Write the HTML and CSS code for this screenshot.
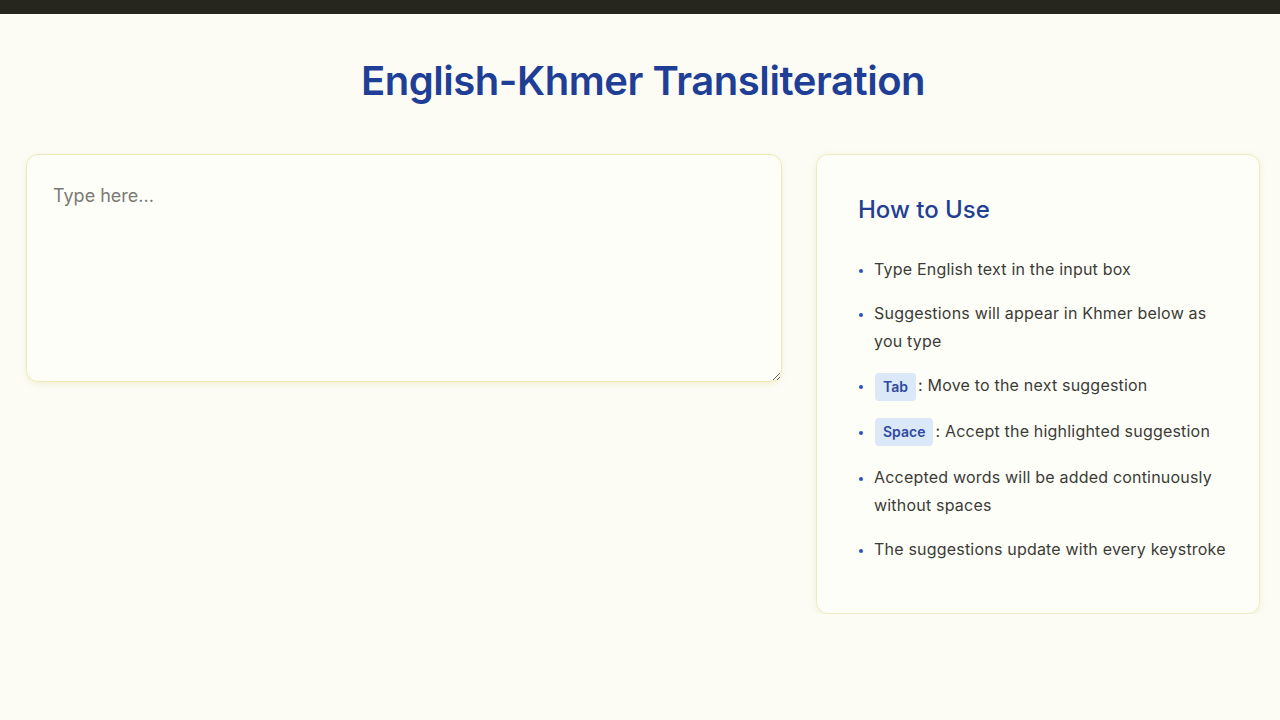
FILE: index.html
```html
<!DOCTYPE html>
<html lang="en">
<head>
<meta charset="utf-8">
<title>English-Khmer Transliteration</title>
<link rel="stylesheet" href="styles.css">
</head>
<body>
<div class="topbar"></div>
<main class="page">
  <h1 class="title">English-Khmer Transliteration</h1>
  <div class="layout">
    <div class="editor">
      <textarea class="input" placeholder="Type here..."></textarea>
    </div>
    <aside class="help">
      <h2 class="help-title">How to Use</h2>
      <ul class="help-list">
        <li>Type English text in the input box</li>
        <li>Suggestions will appear in Khmer below as you type</li>
        <li><span class="key">Tab</span>: Move to the next suggestion</li>
        <li class="key-item"><span class="key">Space</span>: Accept the highlighted suggestion</li>
        <li>Accepted words will be added continuously without spaces</li>
        <li>The suggestions update with every keystroke</li>
      </ul>
    </aside>
  </div>
</main>
</body>
</html>
```

FILE: styles.css
```css
* { box-sizing: border-box; }
html, body { margin: 0; padding: 0; }
body {
  background: #fcfcf5;
  font-family: Inter, "Noto Sans", "Liberation Sans", sans-serif;
  color: #3a3a36;
}
.topbar {
  height: 14px;
  background: #26261e;
}
.page {
  padding: 0 20px 0 26px;
}
.title {
  margin: 0;
  padding-top: 44px;
  text-align: center;
  font-size: 40px;
  line-height: 46px;
  font-weight: 600;
  color: #1f3f96;
  letter-spacing: -0.45px;
}
.layout {
  margin-top: 50px;
  display: grid;
  grid-template-columns: 756px 444px;
  gap: 34px;
  align-items: start;
}
.input {
  display: block;
  width: 756px;
  height: 228px;
  padding: 28px 26px;
  border: 1px solid #eeeab8;
  border-radius: 12px;
  background: #fefef8;
  box-shadow: 0 2px 6px rgba(200, 190, 80, 0.18);
  font-family: Inter, "Noto Sans", "Liberation Sans", sans-serif;
  font-size: 18px;
  line-height: 26px;
  color: #333;
  resize: vertical;
  outline: none;
}
.input::placeholder { color: #7a7a76; }
.help {
  background: #fefef8;
  border: 1px solid #eeeac4;
  border-radius: 12px;
  box-shadow: 0 2px 8px rgba(200, 190, 80, 0.18);
  padding: 40px 30px 50px 41px;
}
.help-title {
  margin: 0;
  font-size: 24px;
  line-height: 30px;
  font-weight: 500;
  color: #223f94;
}
.help-list {
  margin: 30px 0 0;
  padding-left: 16px;
  font-size: 16px;
  line-height: 28px;
  letter-spacing: 0.2px;
  color: #3b3b37;
}
.help-list li {
  margin-bottom: 16px;
}
.help-list li.key-item { margin-bottom: 17px; }
.help-list li:last-child { margin-bottom: 0; }
.help-list li::marker {
  color: #2a52c0;
  font-size: 13px;
}
.key {
  display: inline-block;
  background: #dbe8f8;
  color: #2f4a9e;
  font-size: 14px;
  font-weight: 600;
  line-height: 28px;
  padding: 0 8px;
  margin-left: 1px;
  border-radius: 4px;
  margin-right: 2px;
  vertical-align: middle;
  letter-spacing: 0;
}
```
